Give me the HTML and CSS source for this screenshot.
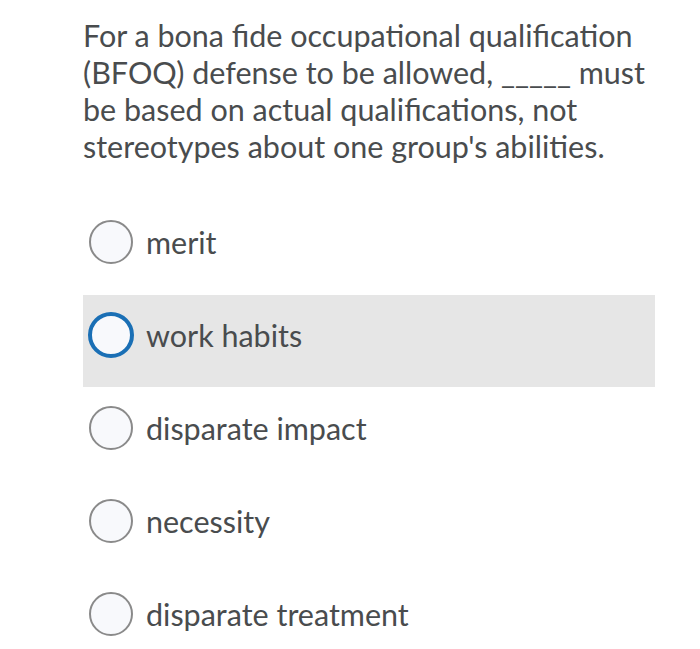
FILE: index.html
```html
<!DOCTYPE html>
<html>
<head>
<meta charset="utf-8">
<link rel="stylesheet" href="styles.css">
</head>
<body>
<div class="quiz">
  <p class="question">For a bona fide occupational qualification (BFOQ) defense to be allowed, _____ must be based on actual qualifications, not stereotypes about one group's abilities.</p>
  <div class="options">
    <div class="option"><span class="radio"></span><span class="label">merit</span></div>
    <div class="option option-focus"><span class="radio radio-focus"></span><span class="label">work habits</span></div>
    <div class="option"><span class="radio"></span><span class="label">disparate impact</span></div>
    <div class="option"><span class="radio"></span><span class="label">necessity</span></div>
    <div class="option"><span class="radio"></span><span class="label">disparate treatment</span></div>
  </div>
</div>
</body>
</html>
```
FILE: styles.css
```css
html, body {
  margin: 0;
  padding: 0;
  background: #ffffff;
}
.quiz {
  margin-left: 83px;
  width: 572px;
  padding-top: 17px;
  font-family: Lato, "Noto Sans", sans-serif;
  color: #494c4e;
}
.question {
  margin: 0;
  width: 572px;
  font-size: 30.5px;
  line-height: 37px;
}
.options {
  margin-top: 37px;
  display: flex;
  flex-direction: column;
  gap: 1px;
}
.option {
  height: 92px;
  box-sizing: border-box;
  padding-top: 18px;
  padding-left: 6px;
  display: flex;
  align-items: flex-start;
}
.option-focus {
  background: #e6e6e6;
}
.radio {
  flex: none;
  width: 44px;
  height: 44px;
  box-sizing: border-box;
  border-radius: 50%;
  border: 2px solid #8a8a8a;
  background: #f8f9fc;
}
.radio-focus {
  border: 4px solid #1a6fb5;
  width: 46px;
  height: 46px;
  margin: -1px -1px -1px -1px;
}
.label {
  margin-left: 13px;
  font-size: 30.5px;
  line-height: 44px;
}
```
